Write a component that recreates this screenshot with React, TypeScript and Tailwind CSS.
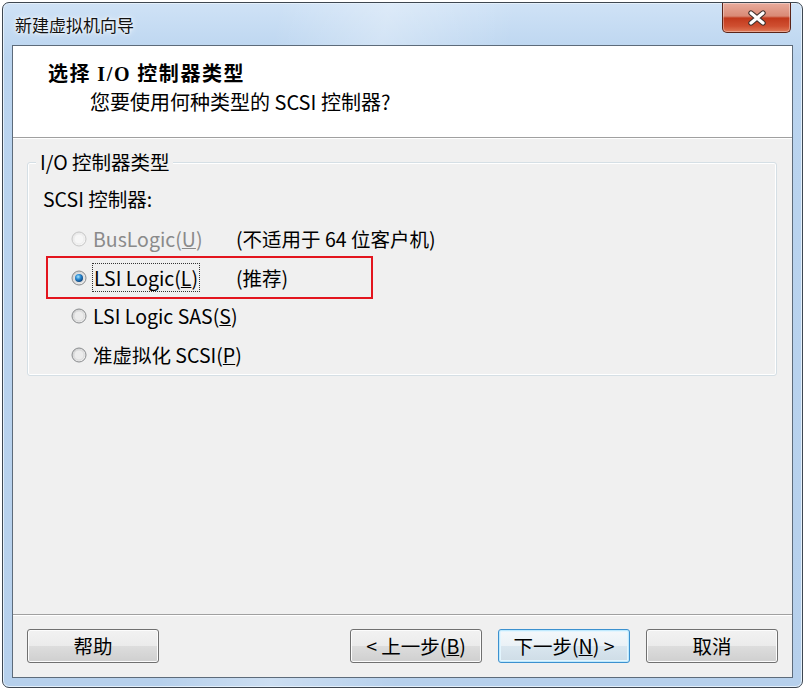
import React from 'react';

type RadioState = 'disabled' | 'normal' | 'checked';

const Radio = ({ state, id }: { state: RadioState; id: string }) => {
  const ring = state === 'disabled' ? '#c6c6c6' : '#8a8c8e';
  return (
    <svg width="16" height="16" viewBox="0 0 16 16" className="shrink-0">
      <defs>
        <linearGradient id={`${id}-bg`} x1="0" y1="0" x2="1" y2="1">
          <stop offset="0" stopColor={state === 'disabled' ? '#e4e4e4' : '#c9cacb'} />
          <stop offset="1" stopColor={state === 'disabled' ? '#fbfbfb' : '#f6f6f6'} />
        </linearGradient>
        <radialGradient id={`${id}-dot`} cx="0.4" cy="0.35" r="0.7">
          <stop offset="0" stopColor="#a6e6ff" />
          <stop offset="0.45" stopColor="#2b8ad2" />
          <stop offset="1" stopColor="#0a3b73" />
        </radialGradient>
      </defs>
      <circle cx="8" cy="8" r="7" fill={`url(#${id}-bg)`} stroke={ring} strokeWidth="1" />
      <circle cx="8" cy="8" r="5" fill={state === 'disabled' ? '#f6f6f6' : '#ececec'} stroke={state === 'disabled' ? '#ededed' : '#dcdcdc'} strokeWidth="1" />
      {state === 'checked' && <circle cx="8" cy="8" r="4" fill={`url(#${id}-dot)`} />}
    </svg>
  );
};

const Btn = ({ children, primary }: { children: React.ReactNode; primary?: boolean }) => (
  <button
    className={`w-[132px] h-[34px] rounded-[3px] border text-[19.5px] leading-[24px] text-black flex items-center justify-center ${
      primary
        ? 'border-[#3c91cf] shadow-[inset_0_0_0_1px_#bfe9fd,inset_0_0_0_2px_#e3f5fe] bg-[linear-gradient(180deg,#f4f8fb_0%,#eaf1f6_50%,#d9e6ef_50%,#cedce6_100%)]'
        : 'border-[#707070] shadow-[inset_0_0_0_1px_#fcfcfc] bg-[linear-gradient(180deg,#f2f2f2_0%,#ebebeb_50%,#dddddd_50%,#cfcfcf_100%)]'
    }`}
  >
    {children}
  </button>
);

const App = () => {
  return (
    <div className="w-[806px] h-[690px] bg-white p-[2px] font-['Noto_Sans_CJK_SC',sans-serif]">
      <div className="w-[801px] h-[686px] rounded-[7px] border border-[#3e4751] flex flex-col bg-[linear-gradient(100deg,rgba(255,255,255,0)_30%,rgba(255,255,255,0.3)_42%,rgba(255,255,255,0)_56%),linear-gradient(180deg,#cfe2f6_0%,#bad4ef_8%,#b6d0ec_100%)] shadow-[inset_0_0_0_1px_#e4f0fb]">
        {/* title bar */}
        <div className="h-[42px] flex items-start justify-between pl-[12px] pr-[11px]">
          <div className="pt-[10px] text-[17px] leading-[24px] text-[#111] [text-shadow:0_0_6px_#ffffff,0_0_3px_#ffffff]">
            新建虚拟机向导
          </div>
          <div className="w-[69px] h-[30px] rounded-b-[5px] border border-t-0 border-[#5b2418] flex items-center justify-center bg-[linear-gradient(180deg,#e9ab9c_0%,#d98a76_45%,#c2391c_52%,#cf4f31_80%,#e07a58_100%)] shadow-[inset_0_0_0_1px_rgba(255,255,255,0.35)]">
            <svg width="22" height="16" viewBox="0 0 22 16">
              <path d="M5 3 L17 13 M17 3 L5 13" stroke="#40302c" strokeWidth="5.4" strokeLinecap="round" />
              <path d="M5 3 L17 13 M17 3 L5 13" stroke="#ffffff" strokeWidth="3.2" strokeLinecap="round" />
            </svg>
          </div>
        </div>

        {/* client */}
        <div className="flex-1 mx-[9px] mb-[9px] border border-[#5d6b7a] bg-[#f0f0f0] flex flex-col text-black">
          <div className="h-[92px] bg-white border-b border-[#a0a0a0] pl-[35px] pt-[14px]">
            <div className="text-[20px] leading-[26px] font-bold tracking-[1.6px]">
              选择 <span className="font-['Liberation_Serif',serif]">I/O</span> 控制器类型
            </div>
            <div className="mt-[2px] pl-[42px] text-[20px] leading-[26px]">您要使用何种类型的 SCSI 控制器?</div>
          </div>

          <div className="flex-1 border-t border-white">
            <div className="mt-[23px] ml-[14px] mr-[15px] border border-[#d5dfe5] rounded-[3px] shadow-[inset_0_0_0_1px_#ffffff] pb-[1px] text-[19.5px] leading-[24px]">
              <div className="-mt-[13px] ml-[8px] px-[4px] w-fit bg-[#f0f0f0]">I/O 控制器类型</div>
              <div className="mt-[13px] pl-[15px]">SCSI 控制器:</div>
              <div className="mt-[9px] pl-[43px]">
                <div className="h-[38.5px] flex items-center">
                  <Radio state="disabled" id="r1" />
                  <span className="ml-[6px] w-[143px] text-[#8a8a8a]">
                    BusLogic(<span className="underline">U</span>)
                  </span>
                  <span>(不适用于 64 位客户机)</span>
                </div>
                <div className="h-[38.5px] flex items-center relative">
                  <div className="absolute -left-[25px] top-[-3px] w-[327px] h-[43px] border-2 border-[#e3151e]" />
                  <Radio state="checked" id="r2" />
                  <span className="ml-[5px] w-[144px]">
                    <span className="inline-block border border-dotted border-[#333] px-[1px] leading-[27px]">
                      LSI Logic(<span className="underline">L</span>)
                    </span>
                  </span>
                  <span>(推荐)</span>
                </div>
                <div className="h-[38.5px] flex items-center">
                  <Radio state="normal" id="r3" />
                  <span className="ml-[6px]">
                    LSI Logic SAS(<span className="underline">S</span>)
                  </span>
                </div>
                <div className="h-[38.5px] flex items-center">
                  <Radio state="normal" id="r4" />
                  <span className="ml-[6px]">
                    准虚拟化 SCSI(<span className="underline">P</span>)
                  </span>
                </div>
              </div>
            </div>
          </div>

          <div className="border-t border-[#a0a0a0]">
            <div className="border-t border-white pt-[13px] pb-[14px] px-[14px] flex items-center">
              <Btn>帮助</Btn>
              <div className="ml-auto flex gap-[16px]">
                <Btn>
                  &lt; 上一步(<span className="underline">B</span>)
                </Btn>
                <Btn primary>
                  下一步(<span className="underline">N</span>) &gt;
                </Btn>
                <Btn>取消</Btn>
              </div>
            </div>
          </div>
        </div>
      </div>
    </div>
  );
};

export default App;
